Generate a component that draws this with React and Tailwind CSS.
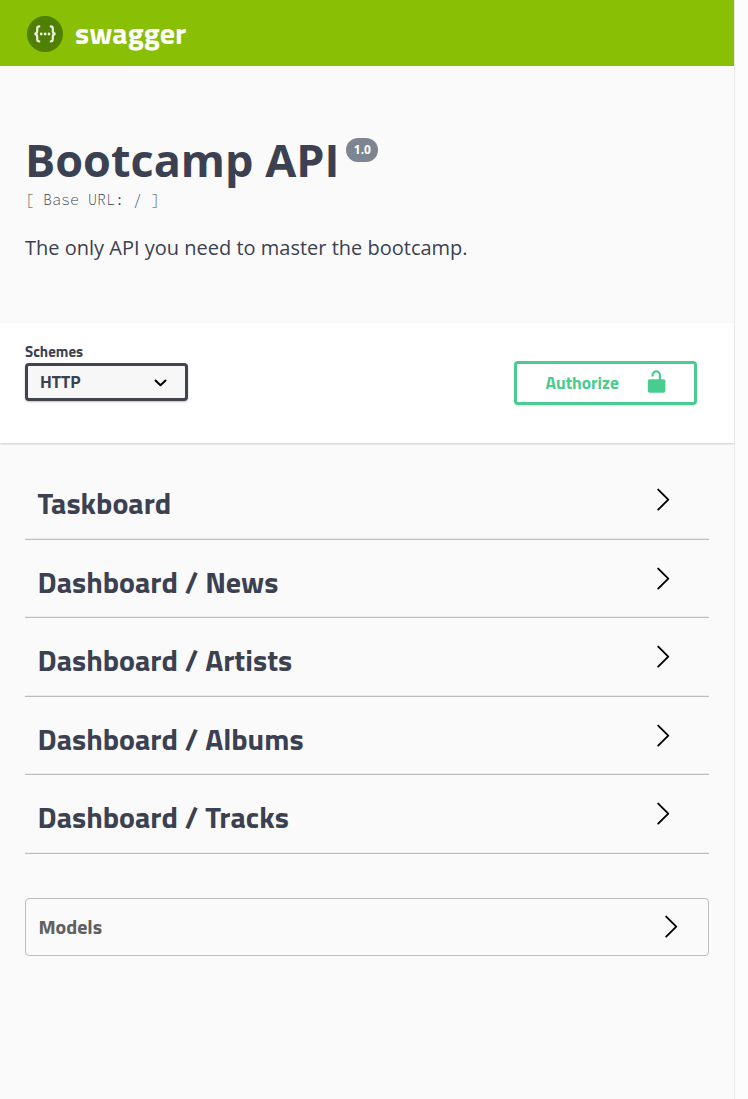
const sections = [
  'Taskboard',
  'Dashboard / News',
  'Dashboard / Artists',
  'Dashboard / Albums',
  'Dashboard / Tracks',
];

function Chevron() {
  return (
    <svg className="h-6 w-4 shrink-0" viewBox="0 0 16 24" fill="none" stroke="#000" strokeWidth="1.9" strokeLinecap="round" strokeLinejoin="round">
      <path d="M3.2 1.6 13.3 11.6 3.2 21.6" />
    </svg>
  );
}

function Logo() {
  return (
    <svg className="size-9 shrink-0" viewBox="0 0 36 36" fill="none">
      <circle cx="18" cy="18" r="18" fill="#4f7f04" />
      <g stroke="#eaf1dc" strokeWidth="2.2">
        <path d="M13.2 10.4h-.9c-1.5 0-2.1.7-2.1 2.1v2.6c0 1.7-.7 2.8-2.8 2.8 2.1 0 2.8 1.1 2.8 2.8v2.6c0 1.5.6 2.2 2.1 2.2h.9" />
        <path d="M22.8 10.4h.9c1.5 0 2.1.7 2.1 2.1v2.6c0 1.7.7 2.8 2.8 2.8-2.1 0-2.8 1.1-2.8 2.8v2.6c0 1.5-.6 2.2-2.1 2.2h-.9" />
      </g>
      <g fill="#eaf1dc">
        <circle cx="14.2" cy="18" r="1.4" />
        <circle cx="18.1" cy="18" r="1.4" />
        <circle cx="22" cy="18" r="1.4" />
      </g>
    </svg>
  );
}

export default function App() {
  return (
    <div className="flex h-[1099px] w-[748px] overflow-hidden bg-[#fafafa] font-['Titillium_Web','Roboto',sans-serif] font-bold text-[#3b4151]">
      <div className="flex w-[734px] shrink-0 flex-col">
        <header className="flex h-[66px] shrink-0 items-center gap-3 bg-[#89bf04] pt-[2px] pl-[27px] text-white">
          <Logo />
          <span className="pb-[2px] text-[30px] leading-9">swagger</span>
        </header>

        <section className="h-[257px] shrink-0 pt-[63px] pl-[25px] font-['Open_Sans',sans-serif]">
          <div className="flex items-start">
            <h1 className="text-[45px] leading-[62px] whitespace-nowrap">Bootcamp API</h1>
            <span className="mt-[9px] ml-[7px] flex h-6 w-8 items-center justify-center rounded-full bg-[#7d8492] text-xs text-white">1.0</span>
          </div>
          <pre className="mt-[-1px] font-['Source_Code_Pro','Liberation_Mono',monospace] text-[15px] leading-5 font-light text-[#3b4151]">[ Base URL: / ]</pre>
          <p className="mt-[24px] text-[20px] leading-7 font-normal whitespace-nowrap">The only API you need to master the bootcamp.</p>
        </section>

        <section className="flex h-[120px] shrink-0 items-start justify-between bg-white pr-[37px] pl-[25px] shadow-[0_1px_2px_rgba(0,0,0,0.2)]">
          <div className="pt-5">
            <div className="text-[15px] leading-[18px]">Schemes</div>
            <div className="mt-[2px] flex h-[38px] w-[163px] items-center justify-between rounded border-[3px] border-[#41444e] bg-[#f7f7f7] pr-[17px] pl-3 text-[17.5px] shadow-[0_1px_2px_rgba(0,0,0,0.25)]">
              <span className="pt-px">HTTP</span>
              <svg className="mt-px h-4 w-4" viewBox="0 0 16 16" fill="none" stroke="#000" strokeWidth="2" strokeLinecap="round" strokeLinejoin="round">
                <path d="m3.5 5.5 5 4.8 5-4.8" />
              </svg>
            </div>
          </div>
          <button className="mt-[38px] flex h-11 w-[183px] items-center justify-between rounded border-[3px] border-[#49cc90] pr-[27px] pl-[28.5px] text-[17.5px] text-[#49cc90] shadow-[0_1px_2px_rgba(0,0,0,0.1)]">
            <span className="pt-px">Authorize</span>
            <svg className="mb-[2px] h-6 w-5" viewBox="0 0 20 24" fill="none">
              <path d="M5.6 6.4V5a3.65 3.65 0 0 1 7.3 0V10" stroke="#49cc90" strokeWidth="2.2" />
              <path d="M2.6 9.2h14q1.8 0 1.8 1.8v9.2q0 2.6-2.8 2.6H3.6q-2.8 0-2.8-2.6V11q0-1.8 1.8-1.8Z" fill="#49cc90" />
            </svg>
          </button>
        </section>

        <main className="px-[25px] pt-[18.4px]">
          {sections.map((name) => (
            <div key={name} className="flex h-[78.5px] items-start justify-between border-b border-[#bcbdc0] pr-[38px] pl-[12.5px] shadow-[inset_0_-1px_0_#ececec]">
              <h2 className="mt-[24px] text-[30px] leading-9 whitespace-nowrap">{name}</h2>
              <div className="mt-[26.65px]"><Chevron /></div>
            </div>
          ))}
          <div className="mt-[44px] flex h-[58px] items-center justify-between rounded border border-[#bcbdc0] pr-[29px] pl-[12.5px] text-[#606060]">
            <span className="text-[20px]">Models</span>
            <Chevron />
          </div>
        </main>
      </div>
      <div className="w-[14px] border-l border-[#e7e7e7] bg-[#fcfcfc]" />
    </div>
  );
}
